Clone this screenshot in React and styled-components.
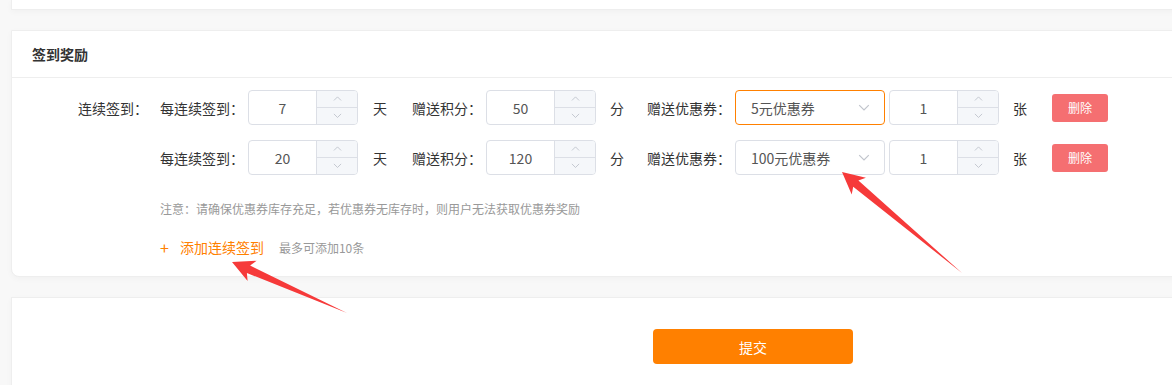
import React from 'react';
import styled, { createGlobalStyle } from 'styled-components';

const GlobalStyle = createGlobalStyle`
    body {
        margin: 0;
        background: #f8f8f8;
        font-family: "Noto Sans CJK SC", "Noto Sans", sans-serif;
        overflow: hidden;
    }
`

const Page = styled.div`
    position: relative;
    width: 1172px;
    height: 385px;
    padding-left: 11px;
    box-sizing: border-box;
    overflow: hidden;
`

const Card = styled.div`
    width: 1200px;
    background: #fff;
    border: 1px solid #eeeeee;
    border-radius: ${({top}) => top ? '0' : '0 0 8px 8px'};
    box-shadow: 0 2px 6px rgba(0, 0, 0, 0.03);
    box-sizing: border-box;
`

const TopCard = styled(Card)`
    height: 10px;
    border-top: none;
    margin-bottom: 20px;
`

const CardHeader = styled.div`
    height: 46px;
    display: flex;
    align-items: center;
    padding-left: 20px;
    border-bottom: 1px solid #eeeeee;
    font-size: 14px;
    font-weight: 600;
    color: #333;
`

const CardBody = styled.div`
    padding: 12px 0 19px;
`

const Row = styled.div`
    display: flex;
    align-items: center;
    height: 35px;
    margin-bottom: 15px;
    font-size: 14px;
    color: #333;
`

const RowLabel = styled.div`
    width: 148px;
    padding-right: 12px;
    box-sizing: border-box;
    text-align: right;
    flex-shrink: 0;
`

const FieldLabel = styled.span`
    margin-right: 4px;
    white-space: nowrap;
`

const Unit = styled.span`
    margin-left: ${({lead}) => lead}px;
    margin-right: ${({gap}) => gap}px;
`

const NumberBox = styled.div`
    width: 110px;
    height: 35px;
    display: flex;
    border: 1px solid #dcdfe6;
    border-radius: 4px;
    box-sizing: border-box;
    overflow: hidden;
    background: #fff;
`

const NumberValue = styled.div`
    flex: 1;
    display: flex;
    align-items: center;
    justify-content: center;
    color: #555;
    font-size: 14px;
`

const Stepper = styled.div`
    width: 40px;
    display: flex;
    flex-direction: column;
    background: #f5f7fa;
    border-left: 1px solid #dcdfe6;
`

const StepButton = styled.div`
    flex: 1;
    display: flex;
    align-items: center;
    justify-content: center;
    border-top: ${({down}) => down ? '1px solid #dcdfe6' : 'none'};
`

const Select = styled.div`
    width: 150px;
    height: 35px;
    display: flex;
    align-items: center;
    justify-content: space-between;
    padding: 0 14px 0 15px;
    border: 1px solid ${({active}) => active ? '#ff8000' : '#dcdfe6'};
    border-radius: 4px;
    box-sizing: border-box;
    color: #555;
    font-size: 14px;
    margin-right: 4px;
`

const DeleteButton = styled.button`
    width: 56px;
    height: 28px;
    border: none;
    border-radius: 3px;
    background: #f56f71;
    color: #fff;
    font-size: 12px;
    font-family: inherit;
    padding: 0;
`

const Content = styled.div`
    padding-left: 148px;
`

const Note = styled.div`
    margin-top: 25px;
    font-size: 12px;
    line-height: 17px;
    color: #999;
`

const AddRow = styled.div`
    display: flex;
    align-items: center;
    height: 20px;
    margin-top: 20px;
`

const AddLink = styled.span`
    display: flex;
    align-items: center;
    color: #ff8000;
    font-size: 14px;
    margin-right: 15px;
`

const Plus = styled.span`
    font-size: 16px;
    margin-right: 11px;
`

const Hint = styled.span`
    color: #999;
    font-size: 12px;
`

const SubmitCard = styled(Card)`
    border-radius: 0;
    height: 110px;
    margin-top: 20px;
    padding-top: 31px;
`

const SubmitButton = styled.button`
    width: 200px;
    height: 35px;
    margin-left: 641px;
    border: none;
    border-radius: 4px;
    background: #ff8000;
    color: #fff;
    font-size: 14px;
    font-family: inherit;
`

const Arrow = styled.svg`
    position: absolute;
    left: 0;
    top: 0;
    pointer-events: none;
`

const Chevron = ({up, color = '#c0c4cc', size = 9}) => (
    <svg width={size} height={size * 0.6} viewBox="0 0 10 6">
        <polyline
            points={up ? '1,5 5,1 9,5' : '1,1 5,5 9,1'}
            fill="none"
            stroke={color}
            strokeWidth="1"
        />
    </svg>
)

const NumberInput = ({value}) => (
    <NumberBox>
        <NumberValue>{value}</NumberValue>
        <Stepper>
            <StepButton><Chevron up /></StepButton>
            <StepButton down><Chevron /></StepButton>
        </Stepper>
    </NumberBox>
)

const rules = [
    {days: 7, points: 50, coupon: '5元优惠券', count: 1, active: true},
    {days: 20, points: 120, coupon: '100元优惠券', count: 1},
]

const App = () => (
    <Page>
        <GlobalStyle />
        <TopCard top />
        <Card>
            <CardHeader>签到奖励</CardHeader>
            <CardBody>
                {rules.map((rule, i) => (
                    <Row key={i}>
                        <RowLabel>{i === 0 ? '连续签到：' : ''}</RowLabel>
                        <FieldLabel>每连续签到：</FieldLabel>
                        <NumberInput value={rule.days} />
                        <Unit lead={15} gap={25}>天</Unit>
                        <FieldLabel>赠送积分：</FieldLabel>
                        <NumberInput value={rule.points} />
                        <Unit lead={14} gap={23}>分</Unit>
                        <FieldLabel>赠送优惠券：</FieldLabel>
                        <Select active={rule.active}>
                            {rule.coupon}
                            <Chevron size={12} />
                        </Select>
                        <NumberInput value={rule.count} />
                        <Unit lead={14} gap={25}>张</Unit>
                        <DeleteButton>删除</DeleteButton>
                    </Row>
                ))}
                <Content>
                    <Note>注意：请确保优惠券库存充足，若优惠券无库存时，则用户无法获取优惠券奖励</Note>
                    <AddRow>
                        <AddLink><Plus>+</Plus>添加连续签到</AddLink>
                        <Hint>最多可添加10条</Hint>
                    </AddRow>
                </Content>
            </CardBody>
        </Card>
        <SubmitCard top>
            <SubmitButton>提交</SubmitButton>
        </SubmitCard>
        <Arrow width="1172" height="385">
            <polygon
                points="232,262 256.6,260.8 250.1,265.6 347,313 246.9,273 247.6,281"
                fill="#f63a3a"
            />
            <polygon
                points="842,172 865.9,177.8 858.4,180.5 962,273 853.2,186.7 851.7,194.6"
                fill="#f63a3a"
            />
        </Arrow>
    </Page>
)

export default App
